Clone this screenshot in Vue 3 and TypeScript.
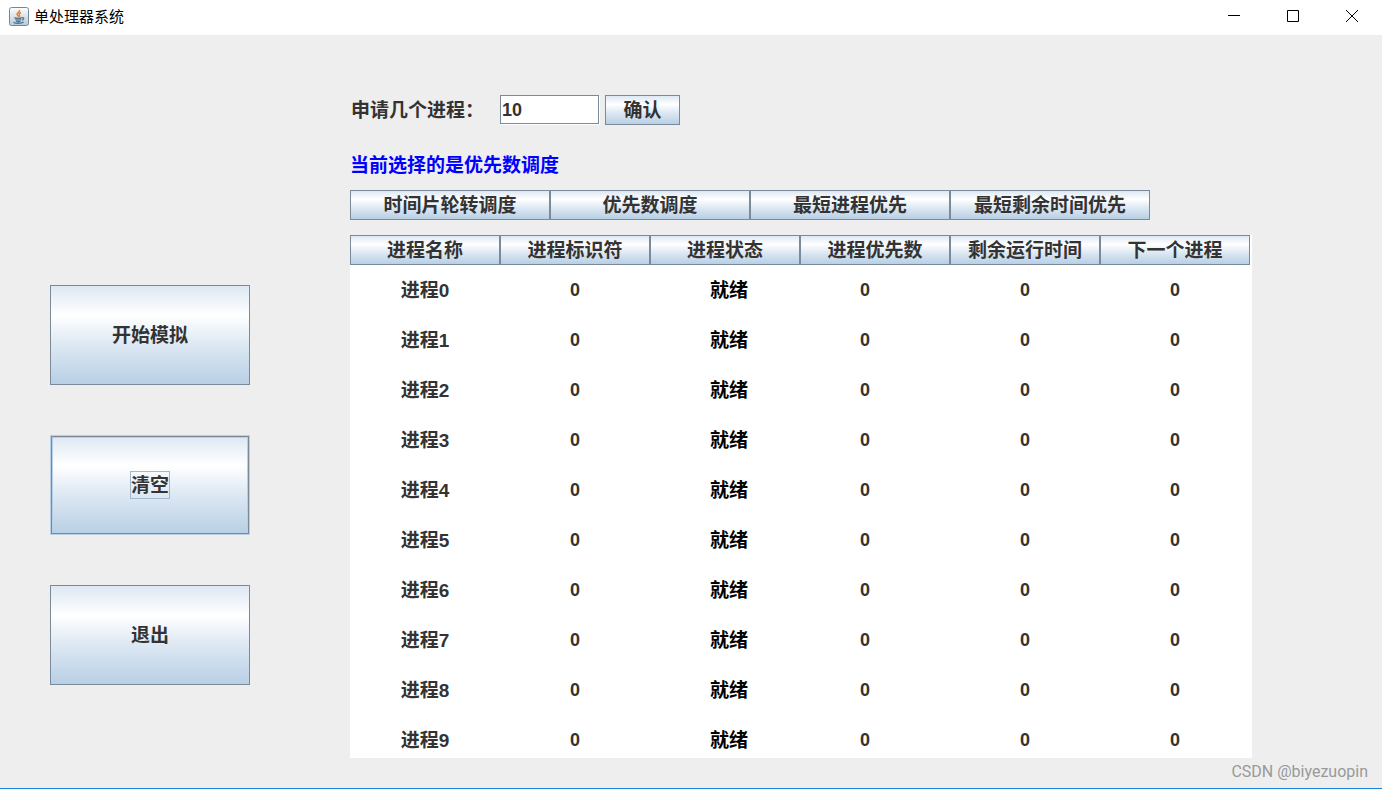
<script setup lang="ts">
import { ref } from 'vue'

interface ProcessRow {
  name: string
  id: number
  state: string
  priority: number
  remaining: number
  next: number
}

const modes = ['时间片轮转调度', '优先数调度', '最短进程优先', '最短剩余时间优先']
const headers = ['进程名称', '进程标识符', '进程状态', '进程优先数', '剩余运行时间', '下一个进程']

const count = ref('10')
const mode = ref('优先数调度')

function createRows(total: number): ProcessRow[] {
  return Array.from({ length: total }, (_, i) => ({
    name: `进程${i}`,
    id: 0,
    state: '就绪',
    priority: 0,
    remaining: 0,
    next: 0,
  }))
}

const rows = ref<ProcessRow[]>(createRows(10))

function confirmCount() {
  rows.value = createRows(Math.max(0, Number(count.value) || 0))
}
</script>

<template>
  <div class="window">
    <header class="titlebar">
      <svg class="app-icon" viewBox="0 0 20 20" aria-hidden="true">
        <defs>
          <linearGradient id="iconBg" x1="0" y1="0" x2="0" y2="1">
            <stop offset="0" stop-color="#fdfdfd" />
            <stop offset="1" stop-color="#b9cad8" />
          </linearGradient>
        </defs>
        <rect x="0.5" y="0.5" width="19" height="18" rx="2" fill="url(#iconBg)" stroke="#71889b" />
        <path d="M10.500 3c.6 2-3 2.800-2.400 4.600.3.900 1.300 1.300 1.500 2.400M12 5.500c-2 .8-2.300 1.600-1.600 2.600.4.600.2 1.200-.4 1.900" fill="none" stroke="#e8803a" stroke-width="1.500" />
        <path d="M5.500 10.700c1.800.8 5.500.8 7.300 0M6.300 12.500c1.500.7 4.300.7 5.800 0M7 14c1.200.6 3.400.6 4.600 0M13 10.700c2.400-.6 2.200 1.800-.2 2.400M4.500 15.200c2 1.500 8 1.400 10.200-.2" fill="none" stroke="#4f7590" stroke-width="1.300" />
      </svg>
      <h1 class="title">单处理器系统</h1>
      <div class="controls">
        <button type="button" class="control" aria-label="最小化">
          <svg viewBox="0 0 12 12"><path d="M0 5.500H12" /></svg>
        </button>
        <button type="button" class="control" aria-label="最大化">
          <svg viewBox="0 0 12 12"><path d="M.5.5h11v11H.5z" /></svg>
        </button>
        <button type="button" class="control" aria-label="关闭">
          <svg viewBox="0 0 12 12"><path d="M0 0L12 12M12 0L0 12" /></svg>
        </button>
      </div>
    </header>

    <div class="body">
      <nav class="sidebar">
        <button type="button" class="metal action">开始模拟</button>
        <button type="button" class="metal action focused" @click="rows = []"><span>清空</span></button>
        <button type="button" class="metal action">退出</button>
      </nav>

      <main class="main">
        <form class="request" @submit.prevent="confirmCount">
          <label for="count">申请几个进程：</label>
          <input id="count" v-model="count" type="text" />
          <button type="submit" class="metal confirm">确认</button>
        </form>
        <p class="status">当前选择的是{{ mode }}</p>
        <div class="modes">
          <button v-for="m in modes" :key="m" type="button" class="metal" @click="mode = m">{{ m }}</button>
        </div>
        <div class="panel">
          <table>
            <thead>
              <tr>
                <th v-for="h in headers" :key="h" scope="col">
                  <button type="button" class="metal">{{ h }}</button>
                </th>
              </tr>
            </thead>
            <tbody>
              <tr v-for="row in rows" :key="row.name">
                <td>{{ row.name }}</td>
                <td class="num">{{ row.id }}</td>
                <td class="state">{{ row.state }}</td>
                <td class="num priority">{{ row.priority }}</td>
                <td class="num">{{ row.remaining }}</td>
                <td class="num">{{ row.next }}</td>
              </tr>
            </tbody>
          </table>
        </div>
      </main>
    </div>
    <span class="watermark">CSDN @biyezuopin</span>
  </div>
</template>

<style>
body {
  margin: 0;
}
</style>

<style scoped>
.window,
.window * {
  box-sizing: border-box;
}

.window {
  position: relative;
  display: flex;
  flex-direction: column;
  min-height: 100vh;
  border-bottom: 1px solid #1883d7;
  background: #eee;
  color: #333;
  font: bold 19px/20px "Liberation Sans", "Noto Sans CJK SC", sans-serif;
}

.titlebar {
  display: flex;
  align-items: center;
  height: 35px;
  padding-left: 9px;
  background: #fff;
}

.app-icon {
  width: 20px;
  height: 20px;
  margin-bottom: 2px;
}

.title {
  margin: 0 0 4px 5px;
  color: #000;
  font: 15px/20px "Noto Sans CJK SC", sans-serif;
}

.controls {
  display: flex;
  align-self: stretch;
  margin-right: 1px;
  margin-left: auto;
}

.control {
  display: flex;
  align-items: center;
  justify-content: center;
  width: 59px;
  padding: 0 0 4px;
  border: 0;
  background: none;
}

.control svg {
  width: 12px;
  height: 12px;
  fill: none;
  stroke: #000;
}

.body {
  display: flex;
  flex: 1;
}

.sidebar {
  display: flex;
  flex: none;
  flex-direction: column;
  gap: 50px;
  width: 350px;
  padding: 250px 100px 30px 50px;
}

.metal {
  padding: 2px 0 0;
  border: 1px solid #7a8a99;
  background: linear-gradient(#dde8f3, #fff 30%, #dde8f3 60%, #b8cfe5);
  color: #333;
  font: inherit;
  white-space: nowrap;
}

.action {
  height: 100px;
}

.focused {
  padding: 0;
  border-color: #b8cfe5;
  outline: 0;
  box-shadow: inset 0 0 0 1px #7a8a99, inset 0 0 0 2px #b8cfe5;
}

.focused span {
  display: inline-block;
  padding: 4px 0 2px;
  border: 1px solid #a3b8cc;
}

.main {
  flex: 1;
  min-width: 0;
  padding: 60px 130px 30px 0;
}

.request {
  display: flex;
  height: 30px;
}

.request label {
  width: 150px;
  padding-left: 1px;
  line-height: 32px;
}

.request input {
  width: 99px;
  height: 29px;
  padding: 2px 1px 0;
  border: 1px solid #7a8a99;
  outline: 0;
  background: #fff;
  box-shadow: 1px 1px 0 #fff;
  color: #333;
  font: inherit;
  font-size: 18px;
}

.confirm {
  width: 75px;
  margin-left: 6px;
}

.status {
  margin: 31px 0 14px;
  color: #00f;
}

.modes {
  display: grid;
  grid-template-columns: repeat(4, 1fr);
  margin-right: 102px;
}

.modes .metal,
th .metal {
  width: 100%;
  height: 30px;
}

.panel {
  margin-top: 15px;
  padding-right: 2px;
  background: #fff;
}

table {
  width: 100%;
  border-collapse: collapse;
  table-layout: fixed;
}

th {
  padding: 0;
}

th .metal {
  display: block;
}

td {
  padding: 16px 0 14px;
  text-align: center;
  vertical-align: top;
}

.num {
  padding: 15px 0;
  font-size: 18px;
}

.state {
  padding-left: 8px;
  color: #000;
}

.priority {
  padding-right: 20px;
}

tbody tr:last-child td {
  padding-bottom: 7px;
}

.watermark {
  position: absolute;
  right: 14px;
  bottom: 6px;
  color: #999;
  font: 16px/20px Roboto, sans-serif;
}
</style>
